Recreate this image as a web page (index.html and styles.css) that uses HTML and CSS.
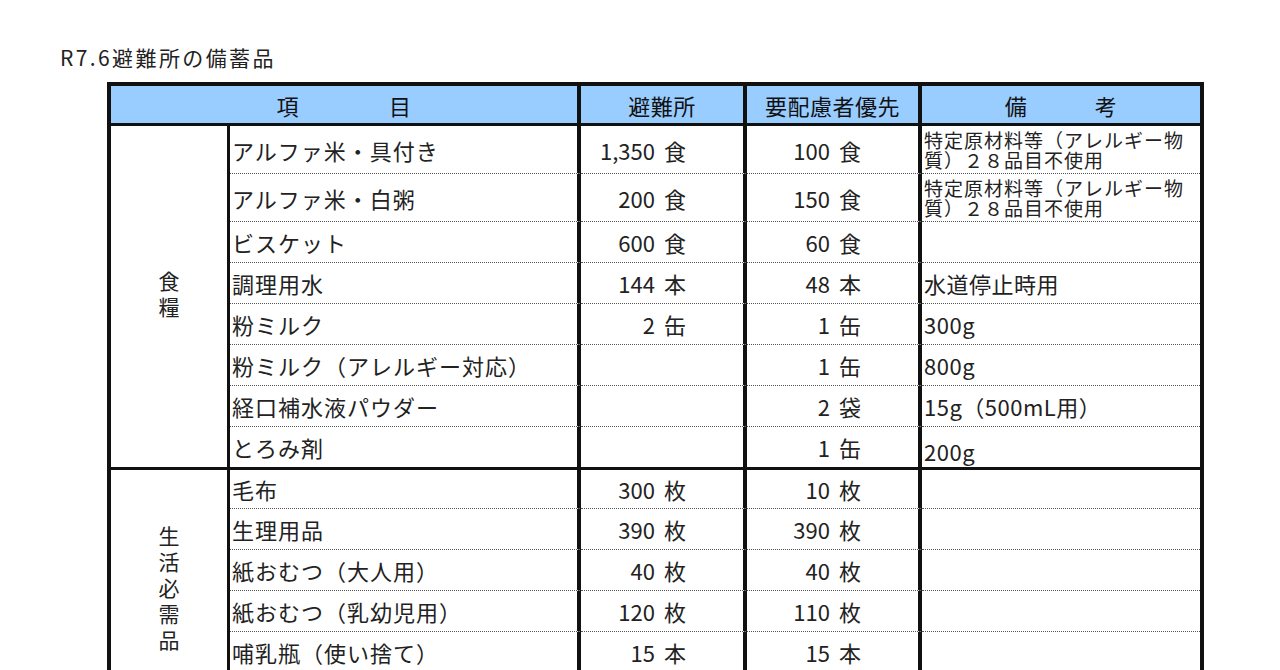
FILE: index.html
```html
<!DOCTYPE html>
<html lang="ja">
<head>
<meta charset="utf-8">
<title>R7.6避難所の備蓄品</title>
<link rel="stylesheet" href="styles.css">
</head>
<body>
<h1 class="title">R7.6避難所の備蓄品</h1>
<div class="sheet">
  <div class="hd hd-item">項　　　　目</div>
  <div class="hd">避難所</div>
  <div class="hd">要配慮者優先</div>
  <div class="hd hd-last">備　　　考</div>

  <div class="cat cat-food"><span class="vt">食糧</span></div>

  <div class="item">アルファ米・具付き</div>
  <div class="num"><span>1,350</span><span class="unit">食</span></div>
  <div class="num"><span>100</span><span class="unit">食</span></div>
  <div class="note small"><span class="ln">特定原材料等（アレルギー物</span><span class="ln">質）２８品目不使用</span></div>

  <div class="item">アルファ米・白粥</div>
  <div class="num"><span>200</span><span class="unit">食</span></div>
  <div class="num"><span>150</span><span class="unit">食</span></div>
  <div class="note small"><span class="ln">特定原材料等（アレルギー物</span><span class="ln">質）２８品目不使用</span></div>

  <div class="item">ビスケット</div>
  <div class="num"><span>600</span><span class="unit">食</span></div>
  <div class="num"><span>60</span><span class="unit">食</span></div>
  <div class="note"></div>

  <div class="item">調理用水</div>
  <div class="num"><span>144</span><span class="unit">本</span></div>
  <div class="num"><span>48</span><span class="unit">本</span></div>
  <div class="note">水道停止時用</div>

  <div class="item">粉ミルク</div>
  <div class="num"><span>2</span><span class="unit">缶</span></div>
  <div class="num"><span>1</span><span class="unit">缶</span></div>
  <div class="note">300g</div>

  <div class="item">粉ミルク（アレルギー対応）</div>
  <div class="num"></div>
  <div class="num"><span>1</span><span class="unit">缶</span></div>
  <div class="note">800g</div>

  <div class="item">経口補水液パウダー</div>
  <div class="num"></div>
  <div class="num"><span>2</span><span class="unit">袋</span></div>
  <div class="note">15g（500mL用）</div>

  <div class="item end">とろみ剤</div>
  <div class="num end"></div>
  <div class="num end"><span>1</span><span class="unit">缶</span></div>
  <div class="note end bottom">200g</div>

  <div class="cat cat-life"><span class="vt">生活必需品</span></div>

  <div class="item">毛布</div>
  <div class="num"><span>300</span><span class="unit">枚</span></div>
  <div class="num"><span>10</span><span class="unit">枚</span></div>
  <div class="note"></div>

  <div class="item">生理用品</div>
  <div class="num"><span>390</span><span class="unit">枚</span></div>
  <div class="num"><span>390</span><span class="unit">枚</span></div>
  <div class="note"></div>

  <div class="item">紙おむつ（大人用）</div>
  <div class="num"><span>40</span><span class="unit">枚</span></div>
  <div class="num"><span>40</span><span class="unit">枚</span></div>
  <div class="note"></div>

  <div class="item">紙おむつ（乳幼児用）</div>
  <div class="num"><span>120</span><span class="unit">枚</span></div>
  <div class="num"><span>110</span><span class="unit">枚</span></div>
  <div class="note"></div>

  <div class="item">哺乳瓶（使い捨て）</div>
  <div class="num"><span>15</span><span class="unit">本</span></div>
  <div class="num"><span>15</span><span class="unit">本</span></div>
  <div class="note"></div>

  <div class="item end">&nbsp;</div>
  <div class="num end"></div>
  <div class="num end"></div>
  <div class="note end"></div>
</div>
</body>
</html>
```

FILE: styles.css
```css
html, body {
  margin: 0;
  padding: 0;
  background: #ffffff;
  overflow: hidden;
}

body {
  font-family: "Noto Sans CJK JP", "Noto Sans", sans-serif;
  color: #222222;
}

.title {
  margin: 0;
  padding: 45px 0 0 60px;
  font-size: 21px;
  line-height: 24px;
  font-weight: 400;
  letter-spacing: 2.4px;
}

.sheet {
  margin: 13px 0 0 107px;
  width: 1097px;
  box-sizing: border-box;
  border-left: 4px solid #111;
  border-right: 4px solid #111;
  border-top: 4px solid #111;
  display: grid;
  grid-template-columns: 119px 351px 166px 175px 278px;
  grid-template-rows: 40px 48px 48px 41px 41px 41px 41px 41px 43px 39px 41px 41px 41px 41px 41px;
}

.sheet > div {
  box-sizing: border-box;
  display: flex;
  align-items: center;
  min-width: 0;
  overflow: hidden;
}

.hd {
  background: #99ccff;
  border-bottom: 3px solid #111;
  border-right: 4px solid #111;
  justify-content: center;
  font-size: 22px;
  letter-spacing: 0.5px;
  font-weight: 400;
  color: #111;
  white-space: pre;
}

.hd-item {
  grid-column: span 2;
}

.hd-last {
  border-right: none;
}

.cat {
  grid-row: span 8;
  border-right: 3px solid #111;
  border-bottom: 3px solid #111;
  justify-content: center;
  font-size: 21px;
}

.cat-life {
  grid-row: span 6;
}

.vt {
  writing-mode: vertical-rl;
  text-orientation: upright;
  letter-spacing: 5px;
  line-height: 24px;
}

.item {
  border-right: 4px solid #111;
  border-bottom: 1px dotted #555;
  padding-left: 2px;
  font-size: 22px;
  letter-spacing: 1px;
  white-space: nowrap;
}

.num {
  border-right: 4px solid #111;
  border-bottom: 1px dotted #555;
  justify-content: flex-end;
  padding-right: 57px;
  font-size: 22px;
  white-space: nowrap;
}

.unit {
  margin-left: 9px;
}

.note {
  border-bottom: 1px dotted #555;
  padding-left: 2px;
  font-size: 22px;
  letter-spacing: 0.5px;
  white-space: nowrap;
}

.sheet > .note.small {
  flex-direction: column;
  align-items: flex-start;
  justify-content: center;
  font-size: 19px;
  letter-spacing: 1px;
}

.ln {
  display: block;
  height: 20px;
  line-height: 20px;
}

.note.bottom {
  align-items: flex-end;
}

.sheet > .end {
  border-bottom: 3px solid #111;
}
```
